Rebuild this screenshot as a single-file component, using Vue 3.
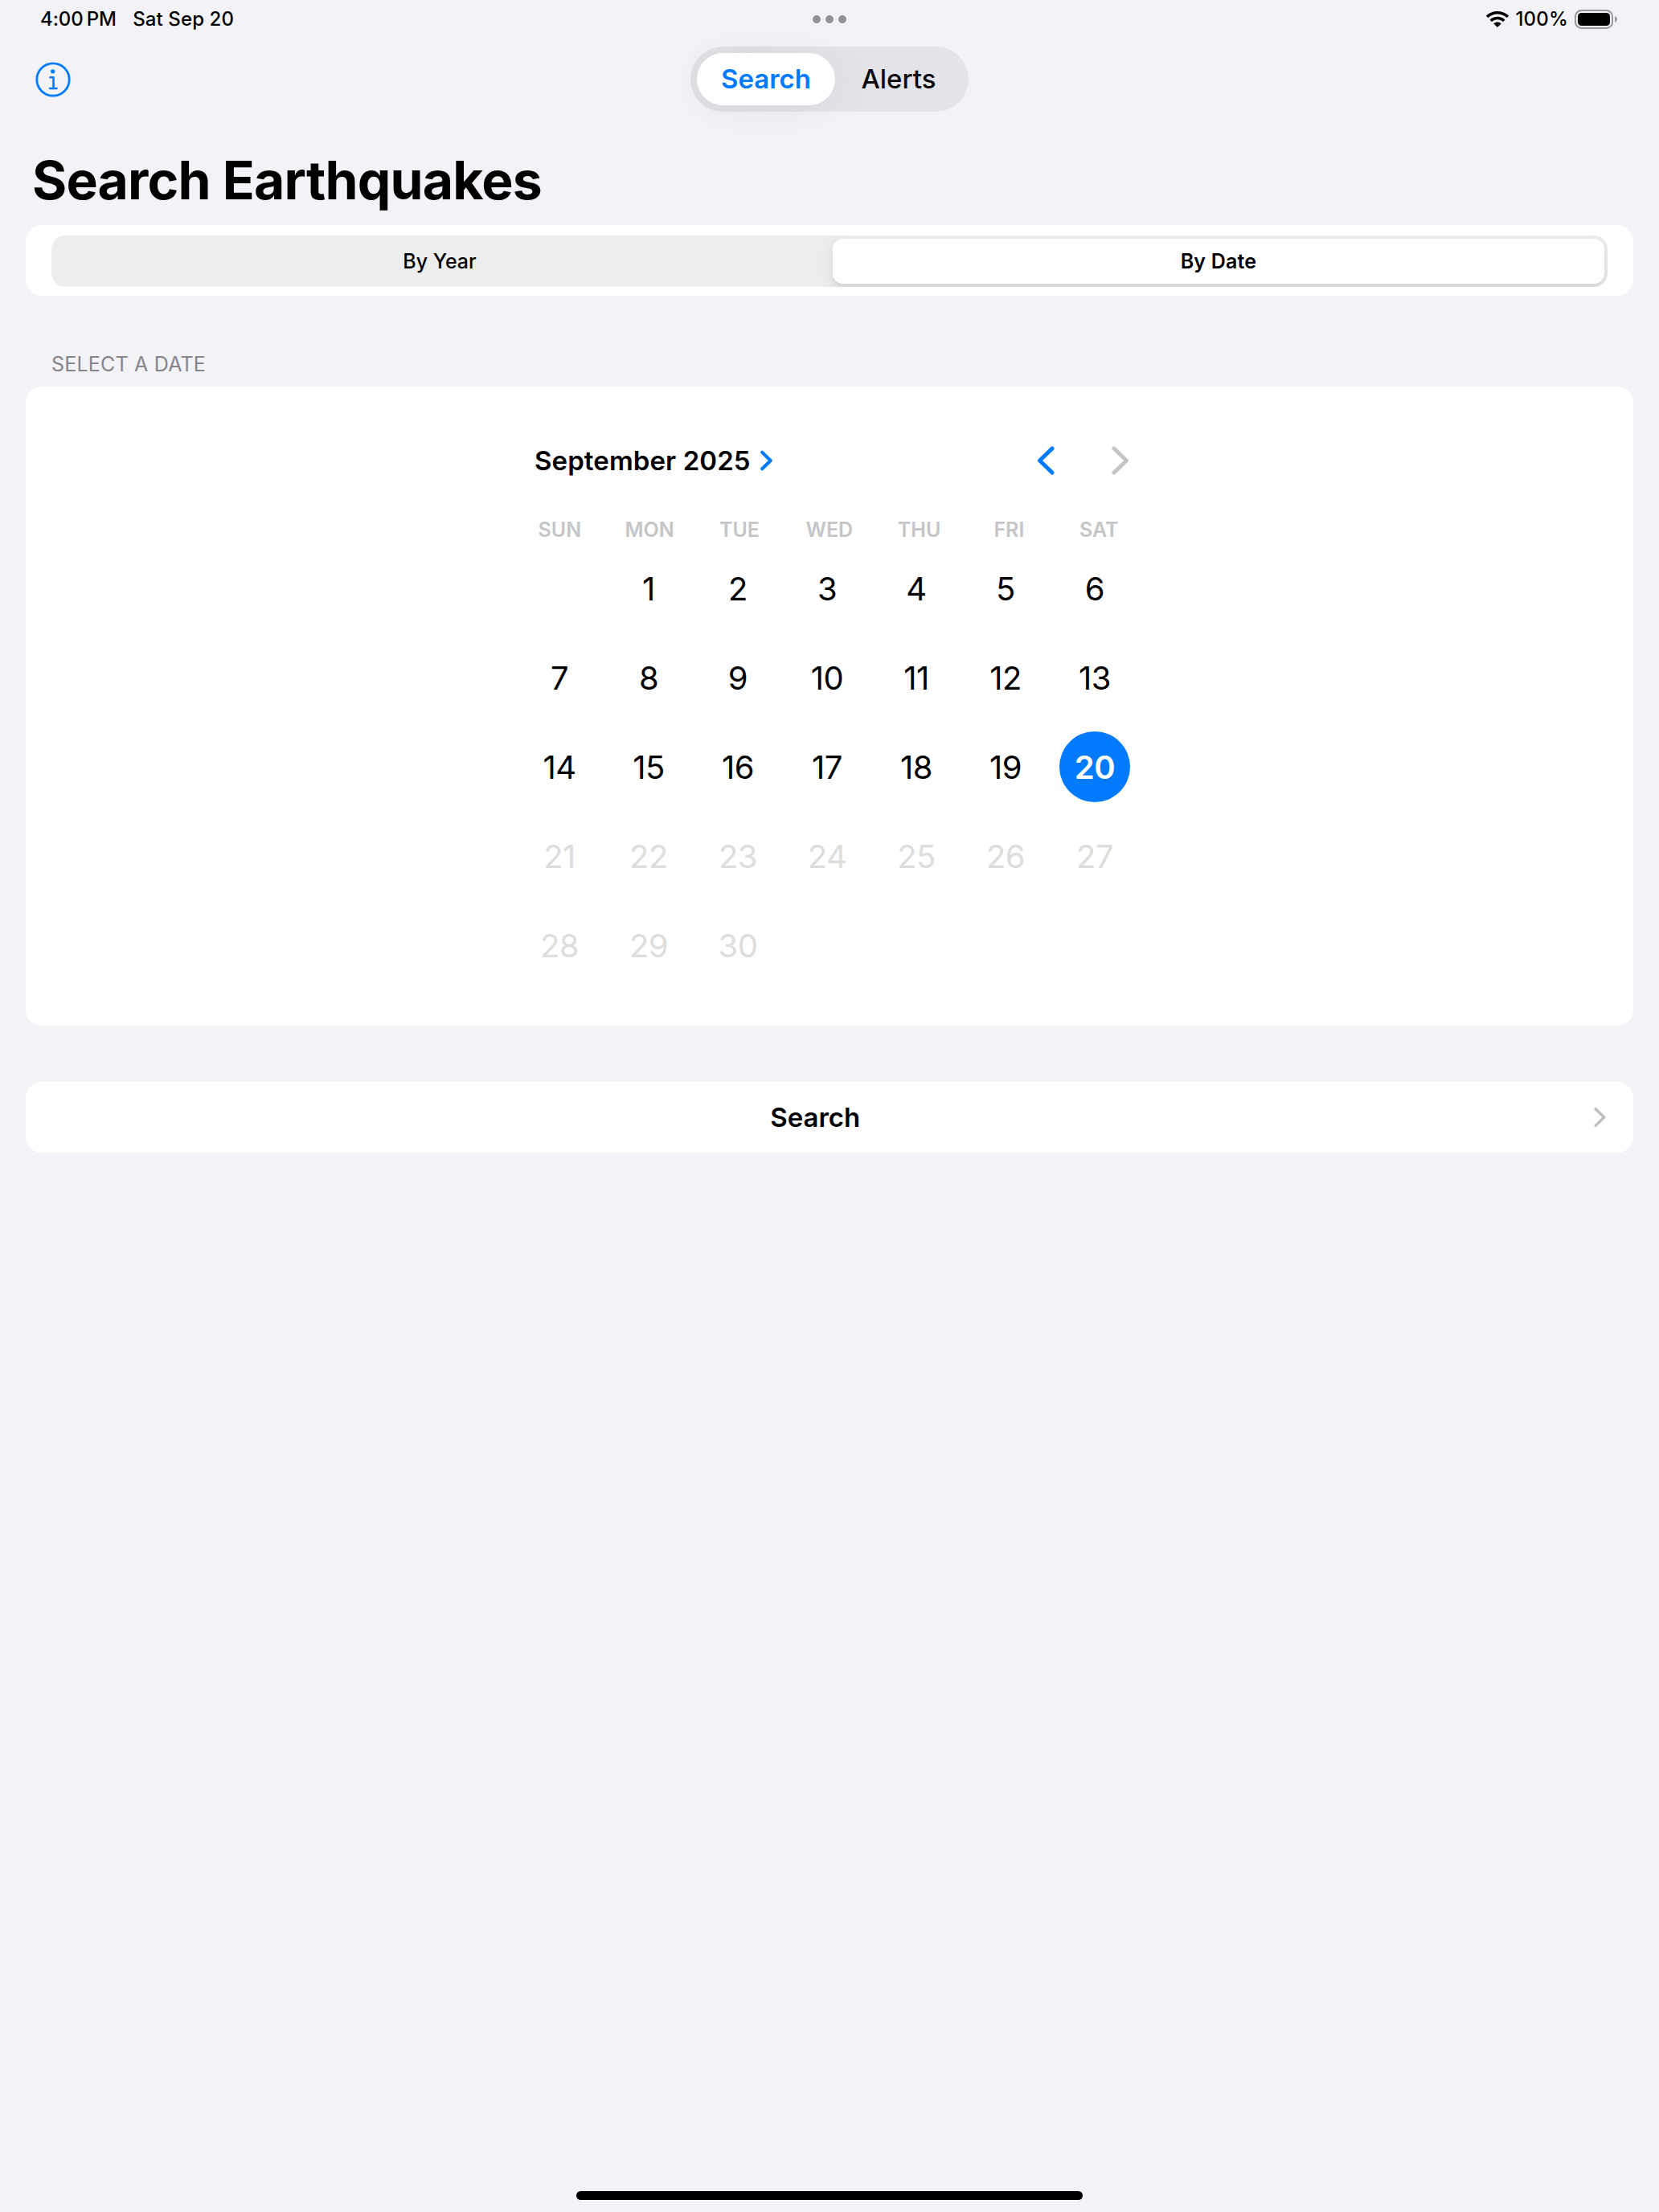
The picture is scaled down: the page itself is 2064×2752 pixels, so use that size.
<script setup>
const weekdays = ['SUN', 'MON', 'TUE', 'WED', 'THU', 'FRI', 'SAT']
const firstOffset = 1
const days = Array.from({ length: 30 }, (_, i) => i + 1)
const today = 20
</script>

<template>
  <div class="screen">
    <header class="status">
      <span class="time">4:00<span class="pm">PM</span></span>
      <span class="date">Sat Sep 20</span>
      <span class="dots"><i></i><i></i><i></i></span>
      <svg class="wifi" viewBox="0 0 28 20">
        <path d="M14 0C8.600 0 3.700 2 .2 5.300q-.4.400 0 .8l1.700 1.700q.4.400.8 0C5.700 5 9.600 3.400 14 3.400S22.300 5 25.300 7.800q.4.400.8 0l1.700-1.700q.4-.4 0-.8C24.300 2 19.400 0 14 0Z" />
        <path d="M14 6.700c-3.500 0-6.700 1.300-9.100 3.500q-.4.400 0 .8l1.700 1.700q.4.400.8 0C9.200 11.100 11.500 10.200 14 10.200s4.800.9 6.600 2.500q.4.400.8 0l1.700-1.700q.4-.4 0-.8C20.700 8 17.500 6.700 14 6.700Z" />
        <path d="M14 13.400c-1.700 0-3.200.6-4.400 1.600q-.4.400 0 .8l3.900 3.800q.5.400 1 0l3.900-3.800q.4-.4 0-.8c-1.200-1-2.700-1.600-4.400-1.600Z" />
      </svg>
      <span class="battery-text">100%</span>
      <svg class="battery" viewBox="0 0 54 24">
        <rect x="1" y="1" width="46" height="22" rx="7.500" fill="none" stroke="#98979c" stroke-width="2" />
        <rect x="4" y="4" width="40" height="16" rx="4.500" />
        <path d="M50 8q3 1.500 3 4t-3 4Z" fill="#98979c" />
      </svg>
    </header>

    <nav class="nav">
      <svg class="info" viewBox="0 0 44 44" fill="none" stroke="#007aff" stroke-linecap="round" stroke-linejoin="round">
        <circle cx="22" cy="22" r="20.200" stroke-width="2.800" />
        <circle cx="21.700" cy="11.800" r="2.600" fill="#007aff" stroke="none" />
        <path d="M18.500 19.300h4V33M18 33h8.500" stroke-width="2.600" />
      </svg>
      <div class="tabs">
        <span class="tab active">Search</span>
        <span class="tab alerts">Alerts</span>
      </div>
    </nav>

    <h1>Search Earthquakes</h1>

    <main>
      <section class="card segment-card">
        <div class="segment">
          <span class="option">By Year</span>
          <span class="option selected">By Date</span>
        </div>
      </section>

      <h2>SELECT A DATE</h2>

      <section class="card calendar-card">
        <div class="calendar">
          <div class="month">
            <span class="month-name">September 2025</span>
            <svg class="month-chevron" viewBox="0 0 16 26"><path d="M2.200 2.700 12.700 13 2.200 23.300" /></svg>
            <svg class="prev" viewBox="0 0 22 36"><path d="M19 3 3.500 18 19 33" /></svg>
            <svg class="next" viewBox="0 0 22 36"><path d="M3 3 18.500 18 3 33" /></svg>
          </div>
          <div class="weekdays">
            <span v-for="w in weekdays" :key="w">{{ w }}</span>
          </div>
          <div class="days">
            <span v-for="n in firstOffset" :key="'blank' + n"></span>
            <span v-for="d in days" :key="d" class="day" :class="{ today: d === today, future: d > today }">{{ d }}</span>
          </div>
        </div>
      </section>

      <section class="card search-row">
        <span class="search-label">Search</span>
        <svg class="disclosure" viewBox="0 0 16 26"><path d="M2.200 2.700 12.700 13 2.200 23.300" /></svg>
      </section>
    </main>
    <div class="home"></div>
  </div>
</template>

<style>
body {
  margin: 0;
  background: #f2f2f7;
}
</style>

<style scoped>
.screen {
  position: relative;
  box-sizing: border-box;
  width: 2064px;
  height: 2752px;
  overflow: hidden;
  background: #f2f2f7;
  color: #000;
  font-family: Inter, "Liberation Sans", sans-serif;
  white-space: nowrap;
  display: flex;
  flex-direction: column;
}
svg { display: block; flex: none; }
.status {
  display: flex;
  align-items: center;
  height: 48px;
  padding: 0 51px 0 50px;
  font-size: 24px;
  line-height: 30px;
  font-weight: 500;
  position: relative;
  flex: none;
}
.time, .date { padding-bottom: 1px; }
.pm { margin-left: 4px; }
.time { letter-spacing: -.1px; }
.date { margin-left: 20.500px; letter-spacing: .1px; }
.dots {
  position: absolute;
  left: 1011px;
  top: 19px;
  display: flex;
  gap: 6px;
}
.dots i { width: 10px; height: 10px; border-radius: 50%; background: #919096; }
.wifi { width: 28px; height: 20px; margin-left: auto; }
.battery-text { margin-left: 8px; padding-bottom: 1px; letter-spacing: .2px; }
.battery { width: 54px; height: 24px; margin-left: 8px; }
.nav {
  display: flex;
  align-items: center;
  height: 81px;
  margin-top: 10px;
  flex: none;
}
.info { width: 44px; height: 44px; margin-left: 43.500px; }
.tabs {
  display: flex;
  box-sizing: border-box;
  width: 346px;
  height: 81px;
  margin-left: 771.500px;
  padding: 8px;
  border-radius: 41px;
  background: linear-gradient(100deg, #e0e0e5, #e3e3e8 50%, #e4e5ea);
  font-size: 33px;
  font-weight: 600;
}
.tab { display: flex; box-sizing: border-box; align-items: center; justify-content: center; height: 65px; padding-bottom: 2px; }
.active {
  width: 173px;
  border-radius: 33px;
  background: #fff;
  color: #007aff;
  box-shadow: 0 4px 60px rgba(0, 0, 0, .06);
}
.alerts { width: 159px; font-weight: 500; color: #0a0a0a; }
h1 {
  margin: 37px 0 0 40px;
  height: 96px;
  line-height: 96px;
  font-size: 66px;
  font-weight: 700;
  letter-spacing: -.8px;
  flex: none;
}
main { display: flex; flex-direction: column; padding: 0 32px; margin-top: 8px; flex: none; }
.card { background: #fff; border-radius: 20px; box-sizing: border-box; }
.segment-card { height: 88px; padding: 13px 32px 11px; }
.segment {
  display: flex;
  box-sizing: border-box;
  height: 64px;
  padding: 4px;
  border-radius: 17px;
  background: #ededed;
  overflow: hidden;
  font-size: 25px;
  font-weight: 500;
}
.option { width: 968px; box-sizing: border-box; padding-right: 10px; display: flex; align-items: center; justify-content: center; }
.selected {
  width: 960px;
  padding: 0;
  border-radius: 13px;
  background: #fff;
  font-weight: 600;
  letter-spacing: .2px;
  box-shadow: 0 6px 16px rgba(0, 0, 0, .1), 0 6px 2px rgba(0, 0, 0, .02);
}
h2 {
  margin: 59px 0 0 32px;
  height: 54px;
  line-height: 53px;
  font-size: 25px;
  font-weight: 400;
  letter-spacing: .2px;
  color: #85858a;
}
.calendar-card { height: 795px; display: flex; justify-content: center; }
.calendar { width: 783px; }
.month { display: flex; align-items: center; height: 64px; margin-top: 60px; padding-left: 24.500px; font-size: 33px; font-weight: 600; letter-spacing: .1px; }
.month svg, .disclosure { fill: none; stroke: #007aff; stroke-linecap: round; stroke-linejoin: round; }
.month-chevron { width: 16px; height: 26px; margin-left: 12.500px; stroke-width: 4; }
.prev, .next { width: 22px; height: 36px; stroke-width: 5; }
.prev { margin-left: auto; }
.month .next { margin: 0 18.500px 0 71.500px; stroke: #c5c5c7; }
.weekdays { display: grid; grid-template-columns: repeat(7, 111.8px); height: 40px; margin-top: 34px; line-height: 40px; text-align: center; font-size: 25px; font-weight: 600; color: #c5c5c7; }
.days { display: grid; grid-template-columns: repeat(7, 111px); grid-auto-rows: 111px; justify-items: center; align-items: center; font-size: 40px; letter-spacing: -.5px; margin: -3px 0 0 -.5px; }
.day { display: flex; box-sizing: border-box; align-items: center; justify-content: center; width: 88px; height: 88px; padding: 2px 0 0 1px; }
.future { color: #ddd; }
.today { border-radius: 50%; background: #007aff; color: #fff; font-weight: 600; }
.search-row { display: flex; align-items: center; height: 88px; margin-top: 70px; padding: 0 33px 0 32px; font-size: 33px; font-weight: 600; }
.search-label { flex: 1; text-align: center; }
.disclosure { width: 16px; height: 26px; margin-left: 18.500px; stroke: #bfbfc2; stroke-width: 3.500; }
.home { position: absolute; left: 717px; top: 2726px; width: 630px; height: 11px; border-radius: 6px; background: #000; }
</style>
